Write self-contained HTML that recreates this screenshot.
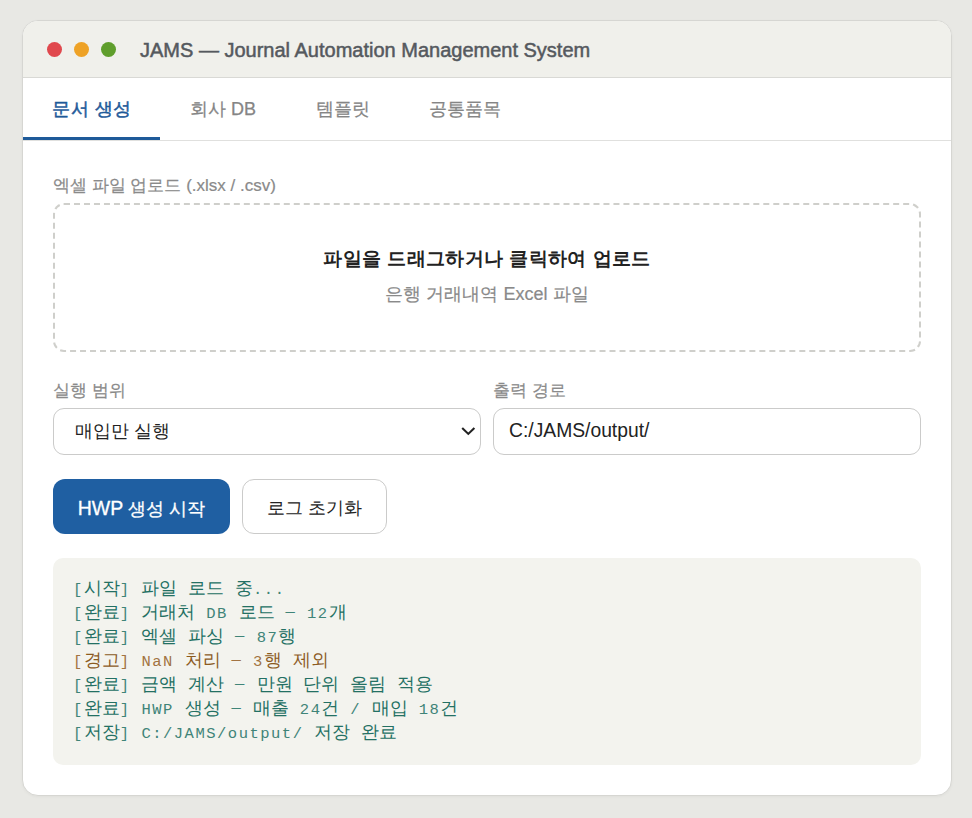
<!DOCTYPE html>
<html><head><meta charset="utf-8">
<style>
*{box-sizing:border-box;margin:0;padding:0}
html,body{width:972px;height:818px;overflow:hidden}
body{background:#e8e8e4;font-family:"Liberation Sans",sans-serif;position:relative}
.win{position:absolute;left:22px;top:20px;width:930px;height:776px;background:#fff;border:1px solid #d6d6d2;border-radius:16px;overflow:hidden;box-shadow:0 1px 3px rgba(0,0,0,0.04)}
.titlebar{position:absolute;left:0;top:0;right:0;height:57px;background:#f0f0eb;border-bottom:1px solid #d9d9d5}
.dot{position:absolute;top:21px;width:15px;height:15px;border-radius:50%}
.title{position:absolute;left:117px;top:18px;font-size:20px;font-weight:normal;-webkit-text-stroke:0.5px #55595e;color:#55595e;white-space:nowrap}
.tabs{position:absolute;left:0;top:57px;right:0;height:63px;border-bottom:1px solid #e0e0de}
.tab{position:absolute;top:0;height:62px;font-size:18px;color:#858585;-webkit-text-stroke:0.25px #858585;white-space:nowrap;line-height:62px}
.tab.active{color:#1e5a99;-webkit-text-stroke:0.5px #1e5a99;letter-spacing:0.5px}
.uline{position:absolute;left:0;top:59px;width:137px;height:3px;background:#1e5a99}
.lbl{position:absolute;font-size:17px;color:#8a8a8a;-webkit-text-stroke:0.2px #8a8a8a;white-space:nowrap}
.drop{position:absolute;left:30px;top:182px;width:868px;height:149px;border:2px dashed #cfcfcb;border-radius:11px}
.drop .t1{position:absolute;left:0;right:0;top:41px;letter-spacing:0.4px;text-align:center;font-size:19px;font-weight:bold;color:#222}
.drop .t2{position:absolute;left:0;right:0;top:76.5px;text-align:center;font-size:18px;color:#8a8a8a;-webkit-text-stroke:0.2px #8a8a8a}
.field{position:absolute;top:387px;height:47px;border:1px solid #cbcbca;border-radius:11px;font-size:18px;color:#222;white-space:nowrap}
.btn{position:absolute;top:458px;height:55px;border-radius:12px;font-size:18px;white-space:nowrap;text-align:center;line-height:55px}
.log{position:absolute;left:30px;top:537px;width:868px;height:207px;background:#f3f3ee;border-radius:10px;font-family:"Liberation Mono",monospace;font-size:15.5px;letter-spacing:1.5px;color:#3f8478}
.log .k{font-size:18px;letter-spacing:0;color:#237063}
.log .w{color:#a27342}
.log .w .k{color:#8c5b1f}
.log .d{position:relative;top:-2px}
.log div{position:absolute;left:20px;white-space:pre;line-height:24px}
</style></head><body>
<div class="win">
  <div class="titlebar">
    <div class="dot" style="left:24px;background:#e0484d"></div>
    <div class="dot" style="left:51px;background:#eea226"></div>
    <div class="dot" style="left:78px;background:#5f9e2c"></div>
    <div class="title">JAMS — Journal Automation Management System</div>
  </div>
  <div class="tabs">
    <div class="tab active" style="left:29px">문서 생성</div>
    <div class="tab" style="left:167px">회사 DB</div>
    <div class="tab" style="left:293px">템플릿</div>
    <div class="tab" style="left:406px">공통품목</div>
    <div class="uline"></div>
  </div>
  <div class="lbl" style="left:30px;top:153px">엑셀 파일 업로드 (.xlsx / .csv)</div>
  <div class="drop">
    <div class="t1">파일을 드래그하거나 클릭하여 업로드</div>
    <div class="t2">은행 거래내역 Excel 파일</div>
  </div>
  <div class="lbl" style="left:30px;top:357.5px">실행 범위</div>
  <div class="lbl" style="left:470px;top:358px">출력 경로</div>
  <div class="field" style="left:30px;width:428px;line-height:45px;padding-left:21px">매입만 실행
    <svg style="position:absolute;left:404px;top:15px" width="21" height="14" viewBox="0 0 21 14"><path d="M4.2 4 L10.3 9.9 L16.4 4" fill="none" stroke="#222" stroke-width="2.1"/></svg>
  </div>
  <div class="field" style="left:470px;width:428px;line-height:45px;padding-left:15px;font-size:19.3px;line-height:44px">C:/JAMS/output/</div>
  <div class="btn" style="left:30px;width:177px;background:#1f5fa2;color:#fff;-webkit-text-stroke:0.3px #fff;line-height:58px"><span style="font-size:19.5px">HWP</span> 생성 시작</div>
  <div class="btn" style="left:219px;width:145px;background:#fff;border:1px solid #cbcbca;color:#222;line-height:56px">로그 초기화</div>
  <div class="log">
    <div style="top:19px">[<span class="k">시작</span>]&#32;<span class="k">파일</span>&#32;<span class="k">로드</span>&#32;<span class="k">중</span>...</div>
    <div style="top:43px">[<span class="k">완료</span>]&#32;<span class="k">거래처</span>&#32;DB&#32;<span class="k">로드</span>&#32;<span class="d">—</span>&#32;12<span class="k">개</span></div>
    <div style="top:67px">[<span class="k">완료</span>]&#32;<span class="k">엑셀</span>&#32;<span class="k">파싱</span>&#32;<span class="d">—</span>&#32;87<span class="k">행</span></div>
    <div class="w" style="top:91px">[<span class="k">경고</span>]&#32;NaN&#32;<span class="k">처리</span>&#32;<span class="d">—</span>&#32;3<span class="k">행</span>&#32;<span class="k">제외</span></div>
    <div style="top:115px">[<span class="k">완료</span>]&#32;<span class="k">금액</span>&#32;<span class="k">계산</span>&#32;<span class="d">—</span>&#32;<span class="k">만원</span>&#32;<span class="k">단위</span>&#32;<span class="k">올림</span>&#32;<span class="k">적용</span></div>
    <div style="top:139px">[<span class="k">완료</span>]&#32;HWP&#32;<span class="k">생성</span>&#32;<span class="d">—</span>&#32;<span class="k">매출</span>&#32;24<span class="k">건</span>&#32;/&#32;<span class="k">매입</span>&#32;18<span class="k">건</span></div>
    <div style="top:163px">[<span class="k">저장</span>]&#32;C:/JAMS/output/&#32;<span class="k">저장</span>&#32;<span class="k">완료</span></div>
  </div>
</div>
</body></html>
